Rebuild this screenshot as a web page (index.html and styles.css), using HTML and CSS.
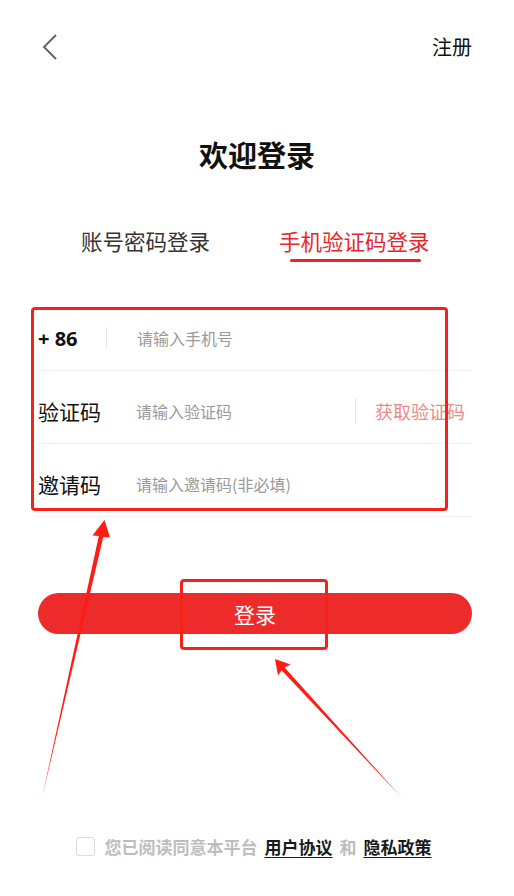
FILE: index.html
```html
<!DOCTYPE html>
<html lang="zh-CN">
<head>
<meta charset="utf-8">
<title>欢迎登录</title>
<link rel="stylesheet" href="styles.css">
</head>
<body>
<div class="page">
  <header class="topbar">
    <svg class="back" width="20" height="28" viewBox="0 0 20 28"><path d="M16 2 L4 14 L16 26" fill="none" stroke="#666" stroke-width="2"/></svg>
    <span class="register">注册</span>
  </header>

  <h1 class="title">欢迎登录</h1>

  <nav class="tabs">
    <div class="tab">账号密码登录</div>
    <div class="tab active">手机验证码登录<span class="underline"></span></div>
  </nav>

  <form class="form">
    <div class="row">
      <div class="label phone-label">+ 86</div>
      <span class="vsep first"></span>
      <input class="field" type="text" placeholder="请输入手机号">
    </div>
    <div class="row">
      <div class="label">验证码</div>
      <input class="field" type="text" placeholder="请输入验证码">
      <span class="vsep"></span>
      <span class="getcode">获取验证码</span>
    </div>
    <div class="row">
      <div class="label">邀请码</div>
      <input class="field" type="text" placeholder="请输入邀请码(非必填)">
    </div>
  </form>

  <button class="login" type="button">登录</button>

  <footer class="agree">
    <span class="checkbox"></span>
    <span class="muted">您已阅读同意本平台</span>
    <span class="link">用户协议</span>
    <span class="muted">和</span>
    <span class="link">隐私政策</span>
  </footer>

  <div class="mark mark-form"></div>
  <div class="mark mark-btn"></div>
  <svg class="arrows" width="514" height="896" viewBox="0 0 514 896">
    <polygon fill="#ff1c12" points="42,798 98.8,536 92.5,535.5 104.5,520 110,537.5 103.2,537"/>
    <polygon fill="#ff1c12" points="402,798 284.6,667.5 290.5,664.5 275,659 278,675.5 281.6,670.2"/>
  </svg>
</div>
</body>
</html>
```

FILE: styles.css
```css
* { box-sizing: border-box; }
html, body { margin: 0; padding: 0; background: #fff; }
body {
  font-family: "Noto Sans CJK SC", "Noto Sans", sans-serif;
  color: #111;
}
.page {
  position: relative;
  width: 514px;
  height: 896px;
  overflow: hidden;
}
.topbar {
  display: flex;
  justify-content: space-between;
  align-items: center;
  height: 40px;
  margin-top: 27px;
  padding: 0 42px 0 40px;
}
.back { display: block; }
.register { font-size: 20px; line-height: 40px; color: #111; }

.title {
  margin: 67px 0 0;
  text-align: center;
  font-size: 29px;
  line-height: 40px;
  font-weight: 700;
  color: #111;
}

.tabs {
  display: flex;
  margin-top: 52px;
  padding-left: 81px;
  gap: 69px;
}
.tab {
  position: relative;
  font-size: 21.5px;
  line-height: 30px;
  color: #333;
}
.tab.active { color: #e8262a; }
.underline {
  display: block;
  height: 3px;
  margin: 3px 9px 0 11px;
  background: #e8262a;
  border-radius: 2px;
}

.form {
  margin: 36px 42px 0 37px;
}
.row {
  display: flex;
  align-items: center;
  height: 73px;
  padding: 8px 0 0 1px;
  border-bottom: 1px solid #f1f1f1;
}
.label {
  width: 98px;
  flex: none;
  font-size: 21px;
  color: #111;
}
.phone-label {
  width: 68px;
  font-size: 20px;
  font-weight: 700;
  font-family: "Noto Sans", "Noto Sans CJK SC", sans-serif;
}
.vsep {
  width: 1px;
  height: 26px;
  background: #e6e6e6;
  flex: none;
}
.vsep.first { height: 22px; margin-right: 30px; }
.field {
  flex: 1;
  width: 0;
  border: none;
  outline: none;
  padding: 0;
  font-family: inherit;
  font-size: 16px;
  color: #333;
  background: transparent;
}
.field::placeholder { color: #9a9a9a; }
.getcode {
  margin: 0 7px 0 19px;
  font-size: 18px;
  color: #f08a8a;
}

.login {
  display: block;
  width: 434px;
  height: 41px;
  margin: 76px 0 0 38px;
  border: none;
  border-radius: 21px;
  background: #ee2b2b;
  color: #fff;
  font-family: inherit;
  font-size: 21px;
  padding: 0;
}

.agree {
  display: flex;
  align-items: center;
  justify-content: center;
  margin-top: 201px;
  padding-right: 7px;
  height: 22px;
  font-size: 17px;
  font-weight: 700;
}
.checkbox {
  width: 19px;
  height: 19px;
  border: 1px solid #dcdcdc;
  border-radius: 3px;
  margin-right: 10px;
}
.muted { color: #bdbdbd; margin-right: 7px; }
.link {
  color: #1a1a1a;
  text-decoration: underline;
  text-underline-offset: 3px;
  margin-right: 7px;
}
.link:last-child { margin-right: 0; }

.mark {
  position: absolute;
  border: 3.5px solid #f5221a;
  border-radius: 4px;
}
.mark-form { left: 31px; top: 307px; width: 417px; height: 204px; }
.mark-btn { left: 180px; top: 579px; width: 148px; height: 71px; }
.arrows {
  position: absolute;
  left: 0;
  top: 0;
  pointer-events: none;
}
```
